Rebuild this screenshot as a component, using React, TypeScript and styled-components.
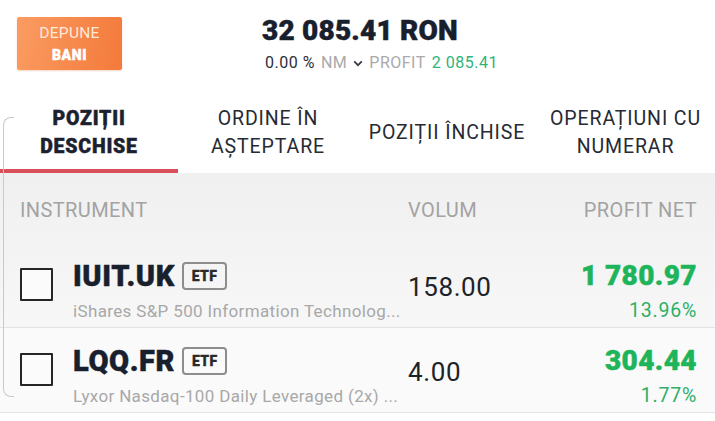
import React from 'react';
import styled, { createGlobalStyle, css } from 'styled-components';

const GlobalStyle = createGlobalStyle`
  html, body {
    margin: 0;
    padding: 0;
    background: #ffffff;
    font-family: Roboto, "Liberation Sans", sans-serif;
    overflow: hidden;
  }
  * { box-sizing: border-box; }
`;

// Roboto tops out at bold here; a thin stroke gets us closer to the black weight.
const heavy = css`
  font-weight: 900;
  -webkit-text-stroke: 0.45px currentColor;
`;

const Page = styled.div`
  width: 715px;
  height: 421px;
  overflow: hidden;
  color: #1b2130;
`;

const TopBar = styled.div`
  display: grid;
  grid-template-columns: 245px auto 1fr;
  align-items: start;
  height: 95px;
  padding: 17px 17px 0;
`;

const DepositButton = styled.button`
  justify-self: start;
  width: 105px;
  height: 53px;
  border: none;
  border-radius: 2px;
  background: linear-gradient(100deg, #fb9c62 0%, #f6874a 60%, #f37a3b 100%);
  box-shadow: 0 1px 2px rgba(200, 90, 30, 0.25);
  display: flex;
  flex-direction: column;
  align-items: center;
  justify-content: center;
  gap: 5px;
  font-family: inherit;
  padding: 2px 0 0;
`;

const ButtonLine = styled.span<{ $strong?: boolean }>`
  font-size: ${p => (p.$strong ? '14px' : '15.5px')};
  font-weight: 400;
  color: ${p => (p.$strong ? '#ffffff' : '#ffe9d9')};
  line-height: 17px;
  letter-spacing: ${p => (p.$strong ? '0.6px' : '0.3px')};
  ${p => p.$strong && heavy};
`;

const Balance = styled.div`
  margin-top: -3px;
  display: flex;
  flex-direction: column;
  align-items: flex-start;
`;

const Total = styled.div`
  ${heavy};
  font-size: 28px;
  line-height: 34px;
  letter-spacing: 0.2px;
  color: #18202e;
`;

const Summary = styled.div`
  margin: 6px 0 0 3px;
  display: flex;
  align-items: center;
  gap: 6px;
  font-size: 16px;
  line-height: 18px;
  letter-spacing: 0.5px;
  white-space: nowrap;
  color: #2a2f3a;
`;

const SummaryText = styled.span<{ $tone?: 'muted' | 'gain' }>`
  color: ${p => (p.$tone === 'muted' ? '#a9a9a9' : p.$tone === 'gain' ? '#2fb37c' : '#2a2f3a')};
`;

const Panel = styled.div`
  position: relative;

  &::before {
    content: '';
    position: absolute;
    left: 3px;
    top: 22px;
    bottom: 16px;
    width: 10px;
    border: 1px solid #c9c9c9;
    border-right: none;
    border-radius: 8px 0 0 8px;
    pointer-events: none;
    z-index: 2;
  }
`;

const Tabs = styled.div`
  display: grid;
  grid-template-columns: 178px 180px 178px 1fr;
  height: 78px;
`;

const Tab = styled.div<{ $active?: boolean }>`
  display: flex;
  align-items: center;
  justify-content: center;
  text-align: center;
  font-size: 19.5px;
  line-height: 28px;
  letter-spacing: 0.9px;
  color: #262a33;
  font-weight: 400;
  padding-top: 2px;
  border-bottom: 4px solid transparent;

  ${p =>
    p.$active &&
    css`
      ${heavy};
      letter-spacing: 0.8px;
      color: #1b2130;
      border-bottom-color: #d9505d;
    `}
`;

const TableGrid = css`
  display: grid;
  grid-template-columns: 388px 1fr auto;
  padding: 0 18px 0 20px;
`;

const HeadRow = styled.div`
  ${TableGrid};
  align-items: center;
  height: 70px;
  background: linear-gradient(180deg, #f0f0f0 0%, #f3f3f3 100%);
  font-size: 20px;
  font-weight: 400;
  letter-spacing: 0.4px;
  color: #a3a3a3;
`;

const HeadCell = styled.div<{ $right?: boolean }>`
  text-align: ${p => (p.$right ? 'right' : 'left')};
  padding-top: 4px;
`;

const Row = styled.div<{ $shade: string }>`
  ${TableGrid};
  align-items: start;
  height: 85px;
  padding-top: 19px;
  background: ${p => p.$shade};
  border-bottom: 1px solid #e2e2e2;
`;

const InstrumentCell = styled.div`
  display: flex;
  align-items: flex-start;
  gap: 20px;
  min-width: 0;
`;

const Checkbox = styled.div`
  flex: none;
  width: 33px;
  height: 33px;
  margin-top: 6px;
  border: 2px solid #262626;
  border-radius: 1px;
  background: #fbfbfb;
`;

const Info = styled.div`
  display: flex;
  flex-direction: column;
  min-width: 0;
  width: 330px;
`;

const SymbolLine = styled.div`
  display: flex;
  align-items: center;
  gap: 7px;
  height: 28px;
`;

const Symbol = styled.span`
  ${heavy};
  font-size: 29px;
  letter-spacing: 0.6px;
  color: #18202e;
  line-height: 28px;
`;

const Badge = styled.span`
  ${heavy};
  height: 28px;
  display: inline-flex;
  align-items: center;
  padding: 0 8px;
  border: 2px solid #8d8d8d;
  border-radius: 4px;
  font-size: 14px;
  letter-spacing: 0.3px;
  color: #2a2a2a;
  -webkit-text-stroke-width: 0.3px;
`;

const Description = styled.div`
  margin-top: 11px;
  font-size: 17px;
  line-height: 20px;
  letter-spacing: 0.35px;
  color: #a8a8a8;
  white-space: nowrap;
`;

const Volume = styled.div`
  padding-top: 10px;
  font-size: 26px;
  line-height: 30px;
  letter-spacing: 0.6px;
  color: #1e2229;
`;

const ProfitCell = styled.div`
  display: flex;
  flex-direction: column;
  align-items: flex-end;
`;

const ProfitValue = styled.div`
  ${heavy};
  font-size: 28px;
  line-height: 28px;
  letter-spacing: 0.4px;
  color: #1db45b;
`;

const ProfitPercent = styled.div`
  margin-top: 9px;
  font-size: 19.5px;
  line-height: 24px;
  letter-spacing: 0.8px;
  color: #2eaf68;
`;

const Chevron = () => (
  <svg width="10" height="7" viewBox="0 0 10 7" aria-hidden>
    <path d="M1.2 1.4 L5 5.2 L8.8 1.4" fill="none" stroke="#3a3d45" strokeWidth="1.8" />
  </svg>
);

interface Position {
  symbol: string;
  name: string;
  volume: string;
  profit: string;
  percent: string;
  shade: string;
}

const positions: Position[] = [
  {
    symbol: 'IUIT.UK',
    name: 'iShares S&P 500 Information Technolog...',
    volume: '158.00',
    profit: '1 780.97',
    percent: '13.96%',
    shade: 'linear-gradient(180deg, #f3f3f3 0%, #f7f7f7 100%)',
  },
  {
    symbol: 'LQQ.FR',
    name: 'Lyxor Nasdaq-100 Daily Leveraged (2x) ...',
    volume: '4.00',
    profit: '304.44',
    percent: '1.77%',
    shade: '#fafafa',
  },
];

const tabs = [
  { label: ['POZIȚII', 'DESCHISE'], active: true },
  { label: ['ORDINE ÎN', 'AȘTEPTARE'] },
  { label: ['POZIȚII ÎNCHISE'] },
  { label: ['OPERAȚIUNI CU', 'NUMERAR'] },
];

export default function App() {
  return (
    <Page>
      <GlobalStyle />
      <TopBar>
        <DepositButton>
          <ButtonLine>DEPUNE</ButtonLine>
          <ButtonLine $strong>BANI</ButtonLine>
        </DepositButton>
        <Balance>
          <Total>32 085.41 RON</Total>
          <Summary>
            <SummaryText>0.00 %</SummaryText>
            <SummaryText $tone="muted">NM</SummaryText>
            <Chevron />
            <SummaryText $tone="muted">PROFIT</SummaryText>
            <SummaryText $tone="gain">2 085.41</SummaryText>
          </Summary>
        </Balance>
        <div />
      </TopBar>

      <Panel>
        <Tabs>
          {tabs.map(t => (
            <Tab key={t.label.join(' ')} $active={t.active}>
              <div>
                {t.label.map(line => (
                  <div key={line}>{line}</div>
                ))}
              </div>
            </Tab>
          ))}
        </Tabs>

        <HeadRow>
          <HeadCell>INSTRUMENT</HeadCell>
          <HeadCell>VOLUM</HeadCell>
          <HeadCell $right>PROFIT NET</HeadCell>
        </HeadRow>

        {positions.map(p => (
          <Row key={p.symbol} $shade={p.shade}>
            <InstrumentCell>
              <Checkbox />
              <Info>
                <SymbolLine>
                  <Symbol>{p.symbol}</Symbol>
                  <Badge>ETF</Badge>
                </SymbolLine>
                <Description>{p.name}</Description>
              </Info>
            </InstrumentCell>
            <Volume>{p.volume}</Volume>
            <ProfitCell>
              <ProfitValue>{p.profit}</ProfitValue>
              <ProfitPercent>{p.percent}</ProfitPercent>
            </ProfitCell>
          </Row>
        ))}
      </Panel>
    </Page>
  );
}
